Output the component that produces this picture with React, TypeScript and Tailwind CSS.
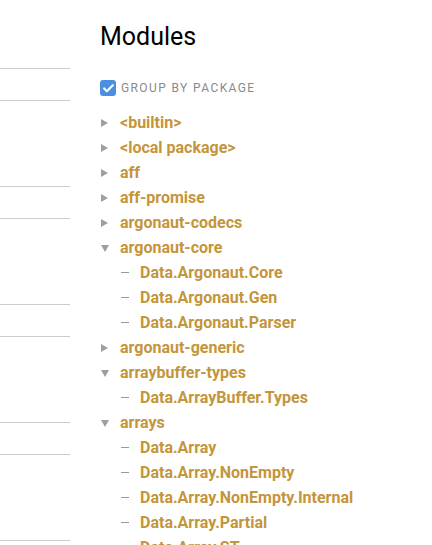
import { Check } from "lucide-react"

type Pkg = { name: string; open?: boolean; modules?: string[] }

const packages: Pkg[] = [
  { name: "<builtin>" },
  { name: "<local package>" },
  { name: "aff" },
  { name: "aff-promise" },
  { name: "argonaut-codecs" },
  { name: "argonaut-core", open: true, modules: ["Data.Argonaut.Core", "Data.Argonaut.Gen", "Data.Argonaut.Parser"] },
  { name: "argonaut-generic" },
  { name: "arraybuffer-types", open: true, modules: ["Data.ArrayBuffer.Types"] },
  {
    name: "arrays",
    open: true,
    modules: ["Data.Array", "Data.Array.NonEmpty", "Data.Array.NonEmpty.Internal", "Data.Array.Partial", "Data.Array.ST"],
  },
]

function Arrow({ open }: { open?: boolean }) {
  return (
    <svg width="20" height="10" viewBox="0 0 20 10" className="shrink-0">
      {open ? (
        <polygon points="1,2 9,2 5,9" fill="#9e9e9e" />
      ) : (
        <polygon points="1,1 8,5 1,9" fill="#9e9e9e" />
      )}
    </svg>
  )
}

export default function App() {
  return (
    <div className="h-[545px] w-[432px] overflow-hidden bg-white flex font-['Roboto',sans-serif]">
      {/* left column (cut off) */}
      <div className="w-[70px] shrink-0 pt-[68px] flex flex-col gap-[85px]">
        {[0, 1, 2, 3, 4].map(i => (
          <div key={i} className="shrink-0 h-[33px] border-y border-[#cccccc]" />
        ))}
      </div>

      <div className="ml-[30px] flex-1">
        <h1 className="mt-[22px] text-[25px] leading-[30px] text-black">Modules</h1>

        <label className="mt-[28px] flex items-center gap-[5px]">
          <span className="w-4 h-4 rounded-[3px] bg-[#4a8fe0] flex items-center justify-center">
            <Check className="w-[13px] h-[13px] text-white" strokeWidth={4} />
          </span>
          <span className="text-[12px] leading-4 tracking-[1.4px] text-[#8a8a8a]">GROUP BY PACKAGE</span>
        </label>

        <ul className="mt-[14px]">
          {packages.map(p => (
            <li key={p.name}>
              <div className="flex items-center h-[25px]">
                <Arrow open={p.open} />
                <span className="text-[16px] font-bold text-[#c4953a] whitespace-nowrap">{p.name}</span>
              </div>
              {p.open &&
                p.modules?.map(m => (
                  <div key={m} className="flex items-center h-[25px] pl-5">
                    <span className="w-5 shrink-0 flex items-center">
                      <span className="block ml-px w-2 h-[1.5px] bg-[#999999]" />
                    </span>
                    <span className="text-[16px] font-bold text-[#c4953a] whitespace-nowrap">{m}</span>
                  </div>
                ))}
            </li>
          ))}
        </ul>
      </div>
    </div>
  )
}
